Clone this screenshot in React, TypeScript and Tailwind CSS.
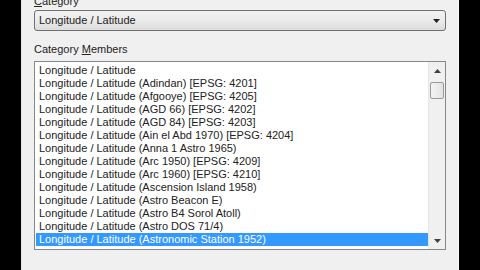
import React from "react";

const items = [
  "Longitude / Latitude",
  "Longitude / Latitude (Adindan) [EPSG: 4201]",
  "Longitude / Latitude (Afgooye) [EPSG: 4205]",
  "Longitude / Latitude (AGD 66) [EPSG: 4202]",
  "Longitude / Latitude (AGD 84) [EPSG: 4203]",
  "Longitude / Latitude (Ain el Abd 1970) [EPSG: 4204]",
  "Longitude / Latitude (Anna 1 Astro 1965)",
  "Longitude / Latitude (Arc 1950) [EPSG: 4209]",
  "Longitude / Latitude (Arc 1960) [EPSG: 4210]",
  "Longitude / Latitude (Ascension Island 1958)",
  "Longitude / Latitude (Astro Beacon E)",
  "Longitude / Latitude (Astro B4 Sorol Atoll)",
  "Longitude / Latitude (Astro DOS 71/4)",
  "Longitude / Latitude (Astronomic Station 1952)",
];

export default function App() {
  return (
    <div
      className="flex w-[480px] h-[270px] overflow-hidden bg-black text-[11px] leading-[13px] text-[#222]"
      style={{ fontFamily: '"Liberation Sans", Arial, sans-serif' }}
    >
      <div className="w-[21px] bg-black" />
      <div className="w-px bg-[#e8e8e8]" />
      <div className="flex-1 bg-[#f0f0f0] flex flex-col px-[12px]">
        <div className="mt-[-5px] h-[13px]">
          <span className="underline">C</span>ategory
        </div>
        <div className="mt-[2px] h-[21px] rounded-[3px] border border-[#707070] bg-gradient-to-b from-[#f2f2f2] via-[#ebebeb] to-[#dcdcdc] flex items-center pl-[4px] pr-[4px]">
          <span className="flex-1">Longitude / Latitude</span>
          <svg width="7" height="4" viewBox="0 0 7 4" className="mr-[1px]">
            <path d="M0 0 H7 L3.5 4 Z" fill="#222" />
          </svg>
        </div>
        <div className="mt-[12px] h-[13px]">
          Category <span className="underline">M</span>embers
        </div>
        <div className="mt-[5px] h-[189px] border border-[#828790] bg-white flex">
          <div className="flex-1 flex flex-col pt-[2px] pl-[1px]">
            {items.map((t, i) => (
              <div
                key={i}
                className={
                  "h-[13px] pl-[3px] whitespace-nowrap overflow-hidden " +
                  (i === items.length - 1 ? "bg-[#3399ff] text-white" : "")
                }
              >
                {t}
              </div>
            ))}
          </div>
          <div className="w-[17px] bg-[#f0f0f0] border-l border-[#e6e6e6] flex flex-col">
            <div className="h-[18px] flex items-center justify-center">
              <svg width="7" height="4" viewBox="0 0 7 4">
                <path d="M0 4 H7 L3.5 0 Z" fill="#404040" />
              </svg>
            </div>
            <div className="mt-[2px] h-[17px] mx-[1px] rounded-[2px] border border-[#9a9a9a] bg-gradient-to-r from-[#f4f4f4] to-[#e2e2e2]" />
            <div className="flex-1" />
            <div className="h-[17px] flex items-center justify-center">
              <svg width="7" height="4" viewBox="0 0 7 4">
                <path d="M0 0 H7 L3.5 4 Z" fill="#404040" />
              </svg>
            </div>
          </div>
        </div>
      </div>
      <div className="w-px bg-[#fafafa]" />
      <div className="w-[21px] bg-black" />
    </div>
  );
}
